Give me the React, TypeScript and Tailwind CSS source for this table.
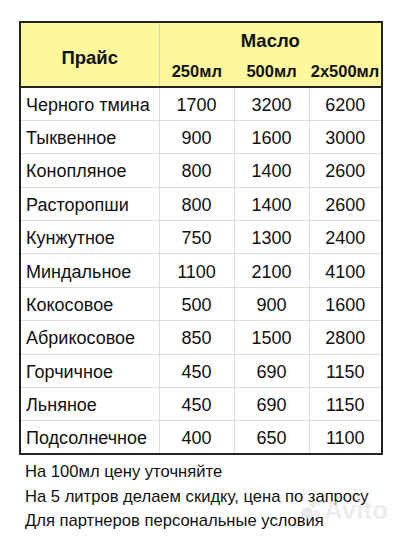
const rows: [string, number, number, number][] = [
  ["Черного тмина", 1700, 3200, 6200],
  ["Тыквенное", 900, 1600, 3000],
  ["Конопляное", 800, 1400, 2600],
  ["Расторопши", 800, 1400, 2600],
  ["Кунжутное", 750, 1300, 2400],
  ["Миндальное", 1100, 2100, 4100],
  ["Кокосовое", 500, 900, 1600],
  ["Абрикосовое", 850, 1500, 2800],
  ["Горчичное", 450, 690, 1150],
  ["Льняное", 450, 690, 1150],
  ["Подсолнечное", 400, 650, 1100],
];

export default function App() {
  return (
    <div
      className="relative w-[400px] h-[540px] bg-white text-[#111] overflow-hidden"
      style={{ fontFamily: '"Liberation Sans", Arial, sans-serif' }}
    >
      <div className="pt-[21px] pl-[19px]">
        <table className="border-collapse border-2 border-[#222] table-fixed w-[362px]">
          <colgroup>
            <col className="w-[139px]" />
            <col className="w-[75px]" />
            <col className="w-[75px]" />
            <col className="w-[73px]" />
          </colgroup>
          <thead className="bg-[#fdf89b]">
            <tr className="h-[33px]">
              <th
                rowSpan={2}
                className="text-[18.5px] font-bold pt-[6px] border-r border-[#d6d6c0] border-b-2 border-b-[#222]"
              >
                Прайс
              </th>
              <th colSpan={3} className="text-[18.5px] font-bold pt-[4px]">
                Масло
              </th>
            </tr>
            <tr className="h-[32px] border-b-2 border-[#222]">
              <th className="text-[16.5px] font-bold pt-[1px]">250мл</th>
              <th className="text-[16.5px] font-bold pt-[1px]">500мл</th>
              <th className="text-[16.5px] font-bold pt-[1px]">2x500мл</th>
            </tr>
          </thead>
          <tbody>
            {rows.map(([name, a, b, c], i) => (
              <tr
                key={name}
                className={`h-[33.4px] text-[18px] ${i < rows.length - 1 ? "border-b border-[#dcdcdc]" : ""}`}
              >
                <td className="pl-[5px] pt-[3px] border-r border-[#dcdcdc] whitespace-nowrap">{name}</td>
                <td className="text-center pt-[3px] border-r border-[#dcdcdc]">{a}</td>
                <td className="text-center pt-[3px] border-r border-[#dcdcdc]">{b}</td>
                <td className="text-center pt-[3px]">{c}</td>
              </tr>
            ))}
          </tbody>
        </table>
      </div>
      <div className="pl-[25px] pt-[5px] text-[16.6px] leading-[24.5px]">
        <p>На 100мл цену уточняйте</p>
        <p>На 5 литров делаем скидку, цена по запросу</p>
        <p>Для партнеров персональные условия</p>
      </div>
      <div className="absolute left-[300px] top-[497px] flex items-center gap-[2px] text-[#e6e6e6] opacity-70 pointer-events-none">
        <svg width="22" height="22" viewBox="0 0 22 22">
          <circle cx="7" cy="14" r="6" fill="#e2e2e2" />
          <circle cx="16" cy="15" r="4" fill="#e8e8e8" />
          <circle cx="13" cy="6" r="3.5" fill="#e6e6e6" />
          <circle cx="19" cy="5" r="2" fill="#ececec" />
        </svg>
        <span className="text-[26px] font-bold leading-none">Avito</span>
      </div>
    </div>
  );
}
